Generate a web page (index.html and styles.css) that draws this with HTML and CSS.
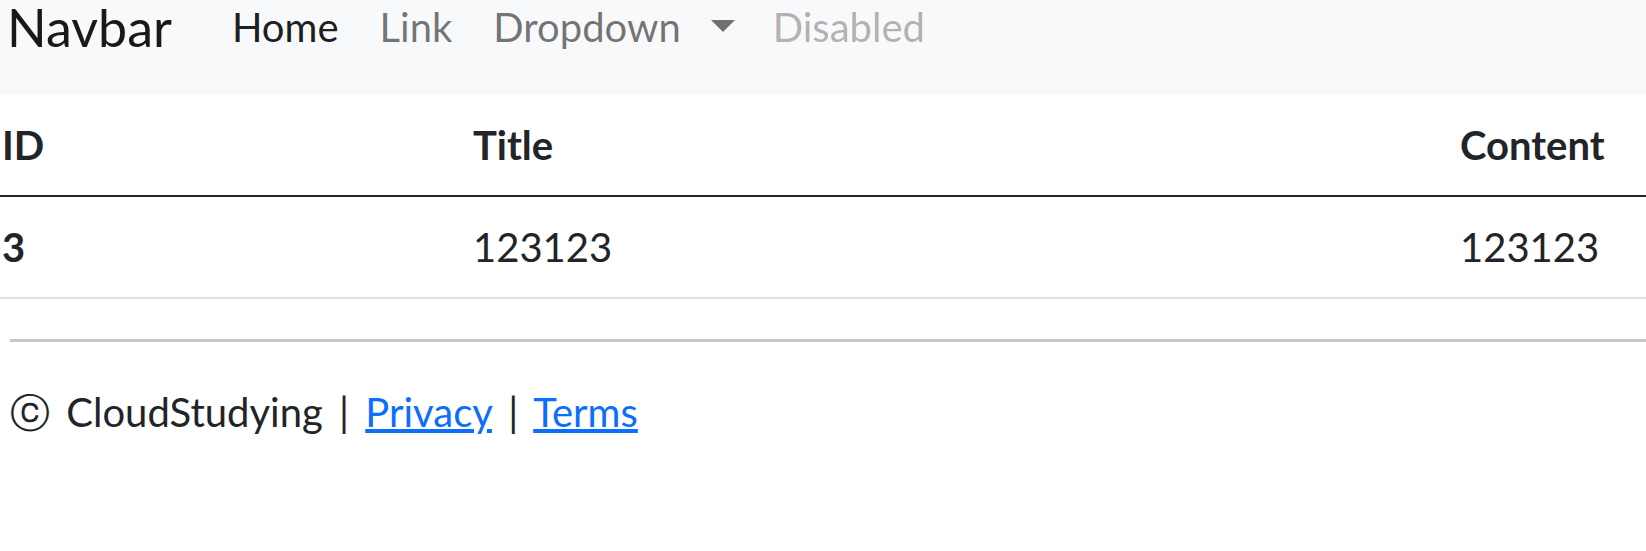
FILE: index.html
```html
<!DOCTYPE html>
<html lang="en">
<head>
    <meta charset="UTF-8">
    <meta name="viewport" content="width=device-width, initial-scale=1.0">
    <title>Posts</title>
    <link rel="stylesheet" href="styles.css">
</head>
<body>
    <nav class="navbar">
        <div class="navbar-row">
            <a class="brand" href="#">Navbar</a>
            <ul class="nav">
                <li><a class="nav-link active" href="#">Home</a></li>
                <li><a class="nav-link" href="#">Link</a></li>
                <li><a class="nav-link dropdown-toggle" href="#">Dropdown</a></li>
                <li><a class="nav-link disabled">Disabled</a></li>
            </ul>
        </div>
    </nav>

    <!-- Posts table -->
    <div class="table-wrap">
        <table class="table">
            <colgroup>
                <col class="col-id">
                <col class="col-title">
                <col>
            </colgroup>
            <thead>
                <tr>
                    <th>ID</th>
                    <th>Title</th>
                    <th>Content</th>
                </tr>
            </thead>
            <tbody>
                <tr>
                    <th>3</th>
                    <td>123123</td>
                    <td>123123</td>
                </tr>
            </tbody>
        </table>
    </div>

    <footer class="footer">
        <hr>
        <p><span class="copy">ⓒ</span> CloudStudying | <a href="#">Privacy</a> | <a href="#">Terms</a></p>
    </footer>
</body>
</html>
```

FILE: styles.css
```css
/* General */
body {
    margin: 0;
    font-family: Lato, "Open Sans", sans-serif;
    font-size: 40px;
    line-height: 1.5;
    color: #212529;
    background-color: #fff;
    overflow: hidden;
}

/* Navbar */
.navbar {
    height: 95px;
    background-color: #f8f9fa;
}

.navbar-row {
    display: flex;
    align-items: center;
    height: 54px;
    padding-left: 7px;
}

.brand {
    font-size: 52px;
    line-height: 54px;
    color: rgba(0, 0, 0, 0.9);
    text-decoration: none;
    margin-right: 40px;
}

.nav {
    display: flex;
    list-style: none;
    margin: 0;
    padding: 0;
}

.nav-link {
    display: block;
    padding: 0 21px 0 20px;
    line-height: 54px;
    color: rgba(0, 0, 0, 0.55);
    text-decoration: none;
}

.nav-link.active {
    color: rgba(0, 0, 0, 0.9);
}

.nav-link.disabled {
    color: rgba(0, 0, 0, 0.3);
}

.dropdown-toggle {
    padding-right: 18px;
}

.dropdown-toggle::after {
    content: "";
    display: inline-block;
    margin-left: 30px;
    vertical-align: 0.255em;
    border-top: 12px solid;
    border-right: 12px solid transparent;
    border-left: 12px solid transparent;
}

/* Table */
.table-wrap {
    margin-left: -18px;
}

.table {
    width: 1700px;
    table-layout: fixed;
    border-collapse: collapse;
}

.col-id {
    width: 471px;
}

.col-title {
    width: 987px;
}

.table th,
.table td {
    padding: 20px;
    text-align: left;
    vertical-align: top;
}

.table th {
    font-weight: 700;
}

.table thead th {
    border-bottom: 2px solid #212529;
}

.table tbody th,
.table tbody td {
    border-bottom: 2px solid #dee2e6;
}

/* Footer */
.footer {
    padding-left: 10px;
}

.footer hr {
    margin: 40px 0;
    height: 0;
    border: 0;
    border-top: 3px solid #c8c8c8;
}

.footer p {
    margin: 0;
    word-spacing: 6px;
}

.footer a {
    color: #0d6efd;
}

.copy {
    font-family: "DejaVu Sans", sans-serif;
}
```
